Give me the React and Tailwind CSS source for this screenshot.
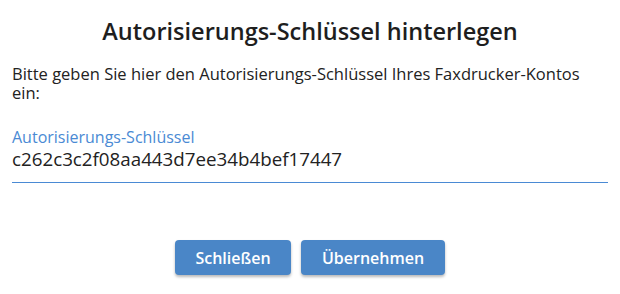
const AUTH_KEY = 'c262c3c2f08aa443d7ee34b4bef17447'

function DialogButton({ children, width }) {
  return (
    <button
      className={`${width} h-[35px] rounded-[4px] bg-[#4a86c7] text-white text-[16px] font-semibold leading-none shadow-[0_2px_3px_rgba(0,0,0,0.28)] hover:bg-[#3f78b6]`}
    >
      {children}
    </button>
  )
}

export default function App() {
  return (
    <div className="w-[620px] h-[294px] bg-white px-3 font-['Open_Sans',sans-serif] text-[#222]">
      {/* Title */}
      <h1 className="pt-[15px] text-center text-[23.5px] leading-[32px] font-semibold text-[#1e1e1e]">
        Autorisierungs-Schlüssel hinterlegen
      </h1>

      {/* Description */}
      <p className="mt-[17px] text-[16.5px] leading-[19px]">
        Bitte geben Sie hier den Autorisierungs-Schlüssel Ihres Faxdrucker-Kontos ein:
      </p>

      {/* Key field */}
      <div className="mt-[25px] pb-[11px] border-b border-[#4a8ad4]">
        <label className="block text-[16px] leading-[20px] text-[#4a8ad4]">Autorisierungs-Schlüssel</label>
        <div className="text-[18.75px] leading-[24px] text-[#222]">{AUTH_KEY}</div>
      </div>

      {/* Actions */}
      <div className="mt-[57px] flex justify-center gap-[10px]">
        <DialogButton width="w-[116px]">Schließen</DialogButton>
        <DialogButton width="w-[144px]">Übernehmen</DialogButton>
      </div>
    </div>
  )
}
